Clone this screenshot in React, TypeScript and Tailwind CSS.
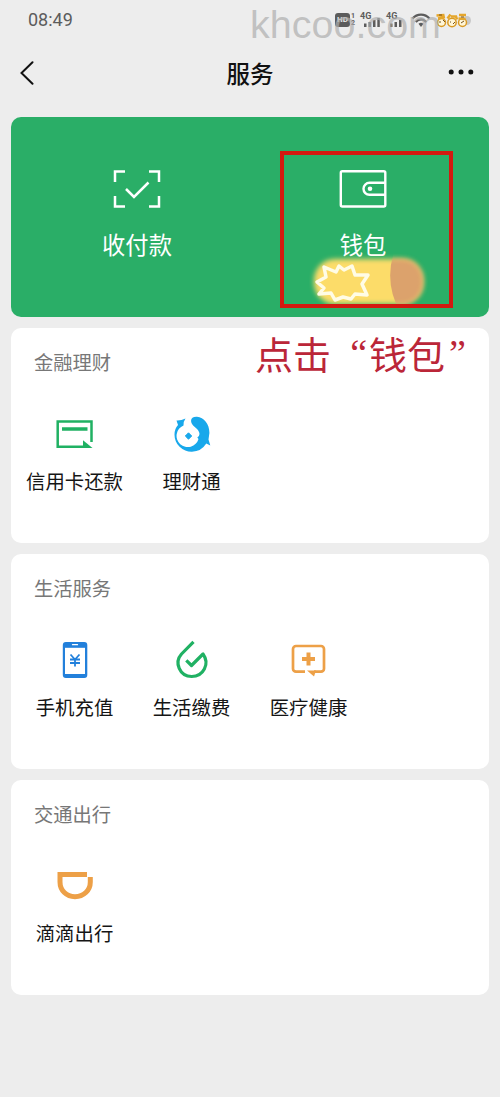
import type { ReactNode } from 'react';

const sans = "font-['Noto_Sans_CJK_SC',sans-serif]";

function Signal({ bars }: { bars: number }) {
  return (
    <div className="relative h-4 w-5 shrink-0">
      <span className="absolute top-0 left-0 font-['Roboto',sans-serif] text-[9px] leading-[9px] font-bold">
        4G
      </span>
      <svg viewBox="0 0 20 16" className="h-4 w-5" fill="currentColor">
        <path d="M4 11.500h2.500v3.500H4zM8.500 10h2.500v5H8.500zM13 8h2.500v7H13z" />
        {bars > 3 && <path d="M17.300 6h2.500v9h-2.500z" />}
      </svg>
    </div>
  );
}

function StatusBar() {
  return (
    <div className="relative flex h-10 items-center justify-between pr-[29px] pl-7 text-[#5c5c5c]">
      <span className="font-['Roboto',sans-serif] text-[18px] leading-10">08:49</span>
      <div className="flex h-4 items-center">
        <span className="flex h-[14px] w-[15px] items-center justify-center rounded-[3px] bg-[#5c5c5c] font-['Roboto',sans-serif] text-[8px] font-bold text-[#ededed]">
          HD
        </span>
        <span className="ml-px w-[9px] font-['Roboto',sans-serif] text-[7px] leading-[7px] font-bold">
          1<br />2
        </span>
        <Signal bars={4} />
        <span className="w-1.5" />
        <Signal bars={3} />
        <svg viewBox="0 0 20 16" className="ml-[5px] h-4 w-5" fill="none" stroke="currentColor" strokeWidth="2.200">
          <path d="M1.500 6.500C6 1.300 14 1.300 18.500 6.500M4.800 10C8 6.500 12 6.500 15.200 10" />
          <path d="M7.500 11.800Q10 9.800 12.500 11.800L10 15z" fill="currentColor" stroke="none" />
        </svg>
        <svg viewBox="0 0 36 16" className="ml-1 h-4 w-9">
          <ellipse cx="32" cy="8.500" rx="4" ry="4.500" fill="#c9c9c9" />
          <g fill="#fff6d8" stroke="#d99a24" strokeWidth="1.500">
            <circle cx="6.500" cy="10.500" r="4" />
            <circle cx="17" cy="10.500" r="4.200" />
            <circle cx="27.500" cy="10.500" r="4" />
          </g>
          <path
            d="M1.500 3.500l8-.5M3 6.500l7-1.500M12.500 6.500l3-4M16 4.500h5l1 3M24 3h7M23.500 6.500l7 .5"
            fill="none"
            stroke="#e5a62b"
            strokeWidth="2.500"
          />
          <path d="M4 10h2M8 8l2 2M15 10h1M18 12l2-2M26 11l3-2M4 3h3M26 5h3" stroke="#75521d" strokeWidth="1" />
        </svg>
      </div>
      <span className="absolute top-px left-[250px] font-['Liberation_Sans',sans-serif] text-[39.500px] leading-[46px] text-[#adadad]/70">
        khcoo.com
      </span>
    </div>
  );
}

function NavBar() {
  return (
    <header className="flex h-[66px] items-center justify-between pr-[26px] pl-5 text-[#111]">
      <svg viewBox="0 0 14 24" className="h-6 w-3.5" fill="none" stroke="currentColor" strokeWidth="2" strokeLinecap="round">
        <path d="M12.500 1.200L1.500 12l11 10.800" />
      </svg>
      <h1 className="pt-0.5 pl-[18px] text-[23.500px] leading-none font-medium">服务</h1>
      <svg viewBox="0 0 26 6" className="-mt-0.5 h-1.5 w-[26px]" fill="currentColor">
        <circle cx="3.200" cy="3" r="2.500" />
        <circle cx="13" cy="3" r="2.500" />
        <circle cx="22.800" cy="3" r="2.500" />
      </svg>
    </header>
  );
}

function ScanIcon() {
  return (
    <svg viewBox="0 0 48 40" className="h-10 w-12" fill="none" stroke="#fff" strokeWidth="2.500">
      <path d="M2 13V2.500h10M36 2.500h10V13M46 27v10.500H36M12 37.500H2V27" />
      <path d="M13 20l8 8 14.500-14.500" />
    </svg>
  );
}

function WalletIcon() {
  return (
    <svg viewBox="0 0 48 40" className="h-10 w-12" fill="none" stroke="#fff" strokeWidth="2.400">
      <rect x="1.800" y="2.200" width="44.500" height="35.300" rx="1.500" />
      <path d="M46 13.800H30.500a6 6 0 0 0 0 12H46" />
      <circle cx="31" cy="19.800" r="2.300" fill="#fff" stroke="none" />
    </svg>
  );
}

function CardIcon() {
  return (
    <svg viewBox="0 0 40 40" className="size-10" fill="none" stroke="#20b163" strokeWidth="2.500">
      <path d="M36.500 28V7.500H2.700V32.800H30" />
      <path d="M7 15h25.500" strokeWidth="3.500" />
      <path d="M28 26.200L37.500 34H28z" fill="#20b163" stroke="none" />
    </svg>
  );
}

function FishIcon() {
  return (
    <svg viewBox="0 0 40 40" className="size-10" fill="#18a8eb">
      <path d="M4.500 6.500Q9 6.800 13.500 4.500Q11.500 7 11.500 11.500A11.200 11.200 0 1 0 26.500 25L25.300 23.500Q28.500 21.500 27 18C25.800 14.500 21 12.500 19.500 9C18 5 20.500 2.500 25 2.800C32 3.700 37.500 10 37.400 19L36.500 25.500L38.300 31.500L34.300 29.500A17.500 17.500 0 0 1 20 37.700A17 17 0 0 1 2.500 20.500Q2.600 14.500 6 11Z" />
      <path d="M16.500 18.800l3.200 3.200-3.200 3.200-3.200-3.200z" strokeLinejoin="round" stroke="#18a8eb" strokeWidth="1" />
    </svg>
  );
}

function PhoneIcon() {
  return (
    <svg viewBox="0 0 40 40" className="size-10">
      <rect x="7.800" y="2" width="24.500" height="36" rx="3" fill="#2280db" />
      <path d="M10 7.800h20V34H10z" fill="#fff" />
      <path d="M17.500 4.700h5" stroke="#fff" strokeWidth="1.300" strokeLinecap="round" />
      <path d="M15.500 14.500l4.500 5 4.500-5M20 19.500V26.500M15 19.500h10M15 23h10" fill="none" stroke="#2280db" strokeWidth="1.800" />
    </svg>
  );
}

function BillIcon() {
  return (
    <svg viewBox="0 0 40 40" className="size-10" fill="none" stroke="#20b163" strokeWidth="3.200" strokeLinejoin="round">
      <path d="M21.500 1.800L9.500 14C2 22.500 7.500 36.500 19.700 36.500c11.500 0 18.500-12.500 11.300-22.500L19.500 25.500l-5.200-5.200" />
    </svg>
  );
}

function HealthIcon() {
  return (
    <svg viewBox="0 0 40 40" className="size-10" fill="none" stroke="#eda047" strokeWidth="2.700">
      <path d="M16 31.700H7a3 3 0 0 1-3-3V9a3 3 0 0 1 3-3h25a3 3 0 0 1 3 3v19.700a3 3 0 0 1-3 3h-7" />
      <path d="M18 30.500h9l-2 6z" fill="#eda047" stroke="none" />
      <path d="M19.500 12.500v13M13 19h13" strokeWidth="4" />
    </svg>
  );
}

function DidiIcon() {
  return (
    <svg viewBox="0 0 40 40" className="size-10" fill="none" stroke="#eda047" strokeWidth="5">
      <path d="M32 8.500H5V16c0 8.500 6.500 14.700 15 14.700S35.300 24.500 35.300 16v-5" />
    </svg>
  );
}

type Item = { label: string; icon: ReactNode };

const sections: { title: string; items: Item[] }[] = [
  {
    title: '金融理财',
    items: [
      { label: '信用卡还款', icon: <CardIcon /> },
      { label: '理财通', icon: <FishIcon /> },
    ],
  },
  {
    title: '生活服务',
    items: [
      { label: '手机充值', icon: <PhoneIcon /> },
      { label: '生活缴费', icon: <BillIcon /> },
      { label: '医疗健康', icon: <HealthIcon /> },
    ],
  },
  {
    title: '交通出行',
    items: [{ label: '滴滴出行', icon: <DidiIcon /> }],
  },
];

function Section({ title, items }: { title: string; items: Item[] }) {
  return (
    <section className="h-[215px] rounded-[10px] bg-white pt-5">
      <h2 className="pl-[23px] text-[19.300px] leading-7 text-[#777]">{title}</h2>
      <div className="mt-[38px] flex pl-[5px]">
        {items.map((item) => (
          <div key={item.label} className="flex w-[117px] shrink-0 flex-col items-center">
            {item.icon}
            <span className="mt-[13px] text-[19.400px] leading-7 whitespace-nowrap text-[#151515]">
              {item.label}
            </span>
          </div>
        ))}
      </div>
    </section>
  );
}

// Brush marks, red frame and caption drawn over the cards
function Annotations() {
  return (
    <>
      <svg viewBox="0 0 130 60" className="absolute top-[135px] left-[309px] h-[60px] w-[130px]">
        <defs>
          <filter id="soft" x="-10%" y="-20%" width="120%" height="140%">
            <feGaussianBlur stdDeviation="2.500" />
          </filter>
          <filter id="softer">
            <feGaussianBlur stdDeviation="0.700" />
          </filter>
          <clipPath id="tip">
            <path d="M84 0h46v60H91Q75 31 85 0z" />
          </clipPath>
        </defs>
        <rect x="5" y="7" width="109" height="45" rx="21" fill="#fcdc69" filter="url(#soft)" />
        <g clipPath="url(#tip)">
          <rect x="42" y="7" width="72" height="45" rx="21" fill="#dca26c" filter="url(#soft)" />
        </g>
        <path
          d="M15 15l12 5 3-6 5 4 8-4 3 9 13 0-6 9 5 11-12-1-4 5-8-2-8 3-4-7-12 1 5-6-7-6 9-5z"
          fill="none"
          stroke="#fffce6"
          strokeWidth="3.500"
          strokeLinejoin="round"
          filter="url(#softer)"
        />
      </svg>
      <div className="absolute top-[34px] left-[280px] h-[157px] w-[173px] border-4 border-[#d31910]" />
      <p className="absolute top-[208px] left-[255px] flex text-[38px] leading-[56px] whitespace-nowrap text-[#bb2638]">
        点击
        <span className="w-[38px] pr-0.5 text-right font-['Liberation_Serif',serif] text-[38px]">“</span>
        钱包
        <span className="w-[38px] pl-1 font-['Liberation_Serif',serif] text-[38px]">”</span>
      </p>
    </>
  );
}

export default function App() {
  return (
    <div className={`h-[1097px] w-[500px] overflow-hidden bg-[#ededed] ${sans}`} lang="zh-CN">
      <StatusBar />
      <NavBar />
      <main className="relative mt-[11px] flex flex-col gap-[11px] px-[11px]">
        <div className="flex h-[200px] rounded-[10px] bg-[#2aae67] pt-[52px] text-[23.300px] leading-8 text-white">
          <div className="ml-[13px] flex w-[226px] flex-col items-center">
            <ScanIcon />
            <span className="mt-[19px]">收付款</span>
          </div>
          <div className="flex w-[226px] flex-col items-center">
            <WalletIcon />
            <span className="mt-[19px]">钱包</span>
          </div>
        </div>
        {sections.map((section) => (
          <Section key={section.title} {...section} />
        ))}
        <Annotations />
      </main>
    </div>
  );
}
